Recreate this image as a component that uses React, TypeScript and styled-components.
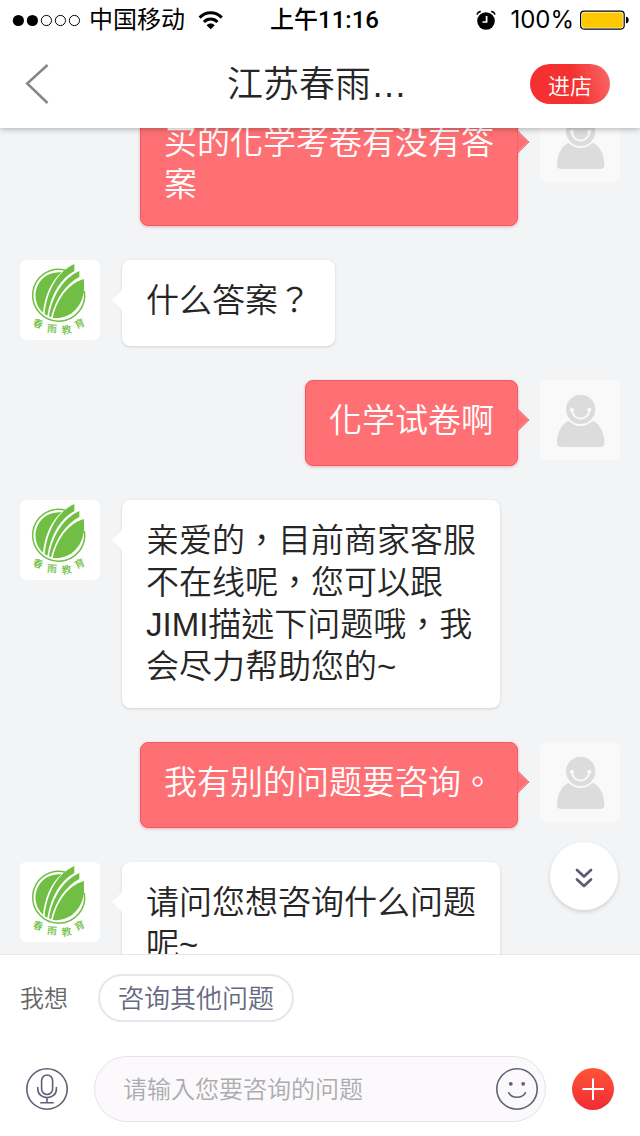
import React, { useLayoutEffect, useRef } from "react";
import styled, { createGlobalStyle, css } from "styled-components";

const GlobalStyle = createGlobalStyle`
  *, *::before, *::after { box-sizing: border-box; }
  body {
    margin: 0;
    background: #f2f4f6;
    font-family: "Liberation Sans", "Noto Sans CJK TC", sans-serif;
    color: #262626;
  }
  button, input { font: inherit; }
  svg { display: block; flex: none; }
`;

const Screen = styled.div`
  display: flex;
  flex-direction: column;
  height: 100vh;
`;

const Header = styled.header`
  position: relative;
  z-index: 2;
  background: #fff;
  box-shadow: 0 1px 6px rgba(0, 0, 0, 0.3);
`;

const StatusBar = styled.div`
  display: grid;
  grid-template-columns: 1fr auto 1fr;
  align-items: center;
  height: 40px;
  padding: 0 11px 0 12px;
  color: #000;
  font-family: Inter, "Noto Sans CJK SC", sans-serif;
  font-size: 24px;
  line-height: 40px;
`;

const StatusGroup = styled.div<{ $end?: boolean }>`
  display: flex;
  align-items: center;
  justify-content: ${(p) => (p.$end ? "flex-end" : "flex-start")};
  gap: ${(p) => (p.$end ? 6 : 9)}px;
`;

const Carrier = styled.span`
  margin-right: 4px;
`;

const Percent = styled.span`
  margin-left: 8px;
`;

const Clock = styled.time`
  padding-left: 8px;
  font-family: Roboto, "Noto Sans CJK SC", sans-serif;
  font-weight: 500;
`;

const NavBar = styled.div`
  display: grid;
  grid-template-columns: 1fr auto 1fr;
  align-items: center;
  height: 88px;
  padding: 0 30px 0 24px;
`;

const BackButton = styled.button`
  justify-self: start;
  padding: 0;
  border: 0;
  background: none;
`;

const Title = styled.h1`
  margin: 0;
  padding-top: 2px;
  font-family: "Liberation Sans", "Noto Sans CJK SC", sans-serif;
  font-size: 36px;
  font-weight: 350;
  line-height: 44px;
`;

const ShopButton = styled.button`
  justify-self: end;
  width: 80px;
  height: 40px;
  padding: 0;
  border: 0;
  border-radius: 20px;
  background: linear-gradient(75deg, #f43030 55%, #fb6a6a);
  color: #fff;
  font-family: "Noto Sans CJK SC", sans-serif;
  font-size: 22px;
  font-weight: 350;
  line-height: 40px;
`;

const ChatArea = styled.main`
  position: relative;
  flex: 1;
  min-height: 0;
`;

const MessageList = styled.div`
  display: flex;
  flex-direction: column;
  gap: 34px;
  height: 100%;
  padding: 0 20px;
  overflow-y: auto;
  scrollbar-width: none;
`;

const MessageRow = styled.div<{ $mine: boolean }>`
  display: flex;
  flex: none;
  flex-direction: ${(p) => (p.$mine ? "row-reverse" : "row")};
  align-items: flex-start;
  gap: 22px;
`;

const Avatar = styled.div<{ $mine: boolean }>`
  flex: none;
  width: 80px;
  height: 80px;
  border-radius: 6px;
  overflow: hidden;
  background: ${(p) => (p.$mine ? "#f9f9f9" : "#fff")};
`;

const mineBubble = css`
  border-color: #ee5a66;
  background: #ff7074;
  color: #fff;
  box-shadow: 0 1px 3px rgba(240, 80, 90, 0.4);

  &::after {
    right: -9px;
    border-color: #ee5a66 #ee5a66 transparent transparent;
    background: linear-gradient(45deg, transparent 50%, #ff7074 50%);
  }
`;

const theirBubble = css`
  border-color: #fff;
  background: #fff;
  box-shadow: 0 1px 3px rgba(0, 0, 0, 0.14);

  &::after {
    left: -9px;
    border-color: transparent;
    background: linear-gradient(225deg, transparent 50%, #fff 50%);
  }
`;

const Bubble = styled.p<{ $mine: boolean }>`
  position: relative;
  max-width: 378px;
  min-height: 86px;
  margin: 0;
  padding: 19px 23px;
  border: 1px solid;
  border-radius: 8px;
  font-size: 33px;
  font-weight: 350;
  line-height: 42px;

  &::after {
    content: "";
    position: absolute;
    top: 31px;
    width: 16px;
    height: 16px;
    border: 1px solid;
    transform: rotate(45deg);
  }

  ${(p) => (p.$mine ? mineBubble : theirBubble)}
`;

const ScrollButton = styled.button`
  position: absolute;
  right: 22px;
  bottom: 44px;
  display: grid;
  place-items: center;
  width: 68px;
  height: 68px;
  padding: 0;
  border: 0;
  border-radius: 50%;
  background: #fff;
  box-shadow: 0 2px 4px rgba(0, 0, 0, 0.14);
`;

const Footer = styled.footer`
  display: flex;
  flex-direction: column;
  gap: 34px;
  padding: 19px 26px 14px;
  border-top: 1px solid #e6e7e9;
  background: #fff;
`;

const SuggestionRow = styled.div`
  display: flex;
  align-items: center;
  gap: 30px;
  margin-left: -6px;
`;

const SuggestionLabel = styled.span`
  padding-top: 2px;
  color: #666;
  font-size: 24px;
  font-weight: 350;
  line-height: 46px;
`;

const Chip = styled.button`
  height: 48px;
  padding: 2px 18px 0;
  border: 2px solid #e6e7eb;
  border-radius: 24px;
  background: #fff;
  color: #666980;
  font-size: 26px;
  font-weight: 350;
  line-height: 42px;
`;

const Composer = styled.form`
  display: flex;
  align-items: center;
  gap: 26px;
`;

const InputPill = styled.div`
  display: flex;
  flex: 1;
  align-items: center;
  min-width: 0;
  height: 66px;
  padding: 0 7px 0 28px;
  border: 1px solid #e4e4e6;
  border-radius: 33px;
  background: #fbf9fb;
`;

const TextInput = styled.input`
  flex: 1;
  min-width: 0;
  height: 48px;
  padding: 2px 0 0;
  border: 0;
  outline: 0;
  background: none;
  font-size: 24px;
  font-weight: 350;

  &::placeholder {
    color: #acacae;
    opacity: 1;
  }
`;

const IconButton = styled.button`
  flex: none;
  width: 42px;
  height: 42px;
  padding: 0;
  border: 0;
  border-radius: 50%;
  background: none;
`;

const PlusButton = styled(IconButton)`
  background: linear-gradient(#ff5538, #f02b34);
`;

const SignalDots = () => (
  <svg width="68" height="14" viewBox="0 0 68 14" aria-hidden="true">
    {[0, 1, 2, 3, 4].map((i) => (
      <circle
        key={i}
        cx={6.4 + i * 14}
        cy="7.5"
        r={i < 2 ? 5.6 : 5.1}
        fill={i < 2 ? "#000" : "none"}
        stroke={i < 2 ? "none" : "#000"}
      />
    ))}
  </svg>
);

const WifiIcon = () => (
  <svg width="26" height="20" viewBox="0 0 26 20" fill="none" stroke="#000" strokeWidth="3" aria-hidden="true">
    <path d="M1.6 7.6C8 1 17.4 1 23.8 7.6" />
    <path d="M5.9 12C9.7 8 15.7 8 19.5 12" />
    <path d="M12.7 19.2L8.6 15.2C10.7 13 14.7 13 16.8 15.2Z" fill="#000" stroke="none" />
  </svg>
);

const AlarmIcon = () => (
  <svg width="20" height="20" viewBox="0 0 20 20" fill="none" aria-hidden="true">
    <circle cx="10" cy="11" r="8.8" fill="#000" />
    <path d="M10.6 6V12H6.5" stroke="#fff" strokeWidth="1.7" />
    <path d="M1 4.6C1.5 2.8 2.8 1.6 4.8 1.4M19 4.6C18.5 2.8 17.2 1.6 15.2 1.4" stroke="#000" strokeWidth="1.5" />
  </svg>
);

const BatteryIcon = () => (
  <svg width="49" height="20" viewBox="0 0 49 20" aria-hidden="true">
    <rect x="0.6" y="1.1" width="43.6" height="18" rx="3.5" fill="#fff" stroke="#000" strokeWidth="1.2" />
    <rect x="2" y="2.5" width="40.8" height="15.2" rx="2.2" fill="#fdc800" />
    <path d="M46 6.8C49.6 7 49.6 13.2 46 13.4Z" fill="#000" />
  </svg>
);

const BackIcon = () => (
  <svg width="28" height="42" viewBox="0 0 28 42" fill="none" stroke="#85868a" strokeWidth="2.5" aria-hidden="true">
    <path d="M23.5 2L3.2 20.5L23.5 40" />
  </svg>
);

const characters: [string, number, number, number][] = [
  ["春", 54, 217, 14],
  ["雨", 96, 232, 4],
  ["教", 140, 235, -10],
  ["育", 179, 217, -24],
];

const ShopLogo = () => (
  <svg width="80" height="80" viewBox="15 15 240 240" role="img" aria-label="春雨教育">
    <g fill="#70bf44">
      <path d="M150 45A78 78 0 1 0 208 108" fill="none" stroke="#70bf44" strokeWidth="4.5" />
      <path d="M140 52A70 70 0 0 0 84 173C88 126 108 78 140 52Z" />
      <path d="M89 178C94 118 122 52 178 27L178 48C136 72 108 118 97 182Z" />
      <path d="M102 184C112 122 146 68 193 48L193 66C154 86 122 130 108 187Z" />
      <path d="M113 189C124 136 158 86 207 72L207 105C203 152 168 194 113 189Z" />
      {characters.map(([ch, x, y, angle]) => (
        <text
          key={ch}
          x={x}
          y={y}
          fontSize="30"
          fontWeight="500"
          fontFamily='"Noto Sans CJK SC", sans-serif'
          transform={`rotate(${angle} ${x + 15} ${y - 11})`}
        >
          {ch}
        </text>
      ))}
    </g>
  </svg>
);

const PersonIcon = () => (
  <svg width="80" height="80" viewBox="0 0 240 240" aria-hidden="true">
    <path
      d="M82 124C62 136 51 162 51 188Q51 201 64 201H180Q193 201 193 188C193 162 182 136 162 124Z"
      fill="#dcdcdc"
    />
    <circle cx="122" cy="88" r="50" fill="#f9f9f9" />
    <circle cx="122" cy="88" r="44" fill="#dcdcdc" />
    <path d="M96 90C98 124 146 124 148 90" fill="none" stroke="#fafafa" strokeWidth="6" />
    <circle cx="96" cy="89" r="6" fill="#fafafa" />
    <circle cx="148" cy="89" r="6" fill="#fafafa" />
  </svg>
);

const DoubleChevron = () => (
  <svg
    width="20"
    height="24"
    viewBox="0 0 20 24"
    fill="none"
    stroke="#5b5d76"
    strokeWidth="2.7"
    strokeLinecap="round"
    strokeLinejoin="round"
    aria-hidden="true"
  >
    <path d="M3 6L10 12.5L17 6M3 15.5L10 22L17 15.5" />
  </svg>
);

const MicIcon = () => (
  <svg width="42" height="42" viewBox="0 0 42 42" fill="none" stroke="#5f6074" strokeWidth="1.6" strokeLinecap="round" aria-hidden="true">
    <circle cx="21" cy="21" r="20.2" />
    <rect x="15.6" y="7" width="11" height="19.5" rx="5.5" />
    <path d="M11.8 19.5V21C11.8 32.5 30.4 32.5 30.4 21V19.5M21 30V34.7M14.8 34.8H27.2" />
  </svg>
);

const SmileIcon = () => (
  <svg width="42" height="42" viewBox="0 0 42 42" fill="none" stroke="#5f6074" strokeWidth="1.6" strokeLinecap="round" aria-hidden="true">
    <circle cx="21" cy="21" r="20.2" />
    <circle cx="14.8" cy="15.8" r="1.9" fill="#5f6074" stroke="none" />
    <circle cx="27.2" cy="15.8" r="1.9" fill="#5f6074" stroke="none" />
    <path d="M12.8 24.8C16 30.7 26 30.7 29.4 24.8" />
  </svg>
);

const PlusIcon = () => (
  <svg width="42" height="42" viewBox="0 0 42 42" fill="none" stroke="#fff" strokeWidth="2" aria-hidden="true">
    <path d="M10.5 21H32M21 10.5V32" />
  </svg>
);

const messages = [
  { mine: true, text: "买的化学考卷有没有答案" },
  { mine: false, text: "什么答案？" },
  { mine: true, text: "化学试卷啊" },
  { mine: false, text: "亲爱的，目前商家客服不在线呢，您可以跟JIMI描述下问题哦，我会尽力帮助您的~" },
  { mine: true, text: "我有别的问题要咨询。" },
  { mine: false, text: "请问您想咨询什么问题呢~" },
];

const INITIAL_SCROLL = 26;

export default function App() {
  const listRef = useRef<HTMLDivElement>(null);

  useLayoutEffect(() => {
    if (listRef.current) listRef.current.scrollTop = INITIAL_SCROLL;
  }, []);

  return (
    <Screen>
      <GlobalStyle />
      <Header>
        <StatusBar>
          <StatusGroup>
            <SignalDots />
            <Carrier>中国移动</Carrier>
            <WifiIcon />
          </StatusGroup>
          <Clock>上午11:16</Clock>
          <StatusGroup $end>
            <AlarmIcon />
            <Percent>100%</Percent>
            <BatteryIcon />
          </StatusGroup>
        </StatusBar>
        <NavBar>
          <BackButton type="button" aria-label="返回">
            <BackIcon />
          </BackButton>
          <Title>江苏春雨…</Title>
          <ShopButton type="button">进店</ShopButton>
        </NavBar>
      </Header>

      <ChatArea>
        <MessageList ref={listRef}>
          {messages.map((m) => (
            <MessageRow key={m.text} $mine={m.mine}>
              <Avatar $mine={m.mine}>{m.mine ? <PersonIcon /> : <ShopLogo />}</Avatar>
              <Bubble $mine={m.mine}>{m.text}</Bubble>
            </MessageRow>
          ))}
        </MessageList>
        <ScrollButton type="button" aria-label="滚动到底部">
          <DoubleChevron />
        </ScrollButton>
      </ChatArea>

      <Footer>
        <SuggestionRow>
          <SuggestionLabel>我想</SuggestionLabel>
          <Chip type="button">咨询其他问题</Chip>
        </SuggestionRow>
        <Composer onSubmit={(e) => e.preventDefault()}>
          <IconButton type="button" aria-label="语音">
            <MicIcon />
          </IconButton>
          <InputPill>
            <TextInput aria-label="输入问题" placeholder="请输入您要咨询的问题" />
            <IconButton type="button" aria-label="表情">
              <SmileIcon />
            </IconButton>
          </InputPill>
          <PlusButton type="button" aria-label="更多">
            <PlusIcon />
          </PlusButton>
        </Composer>
      </Footer>
    </Screen>
  );
}
